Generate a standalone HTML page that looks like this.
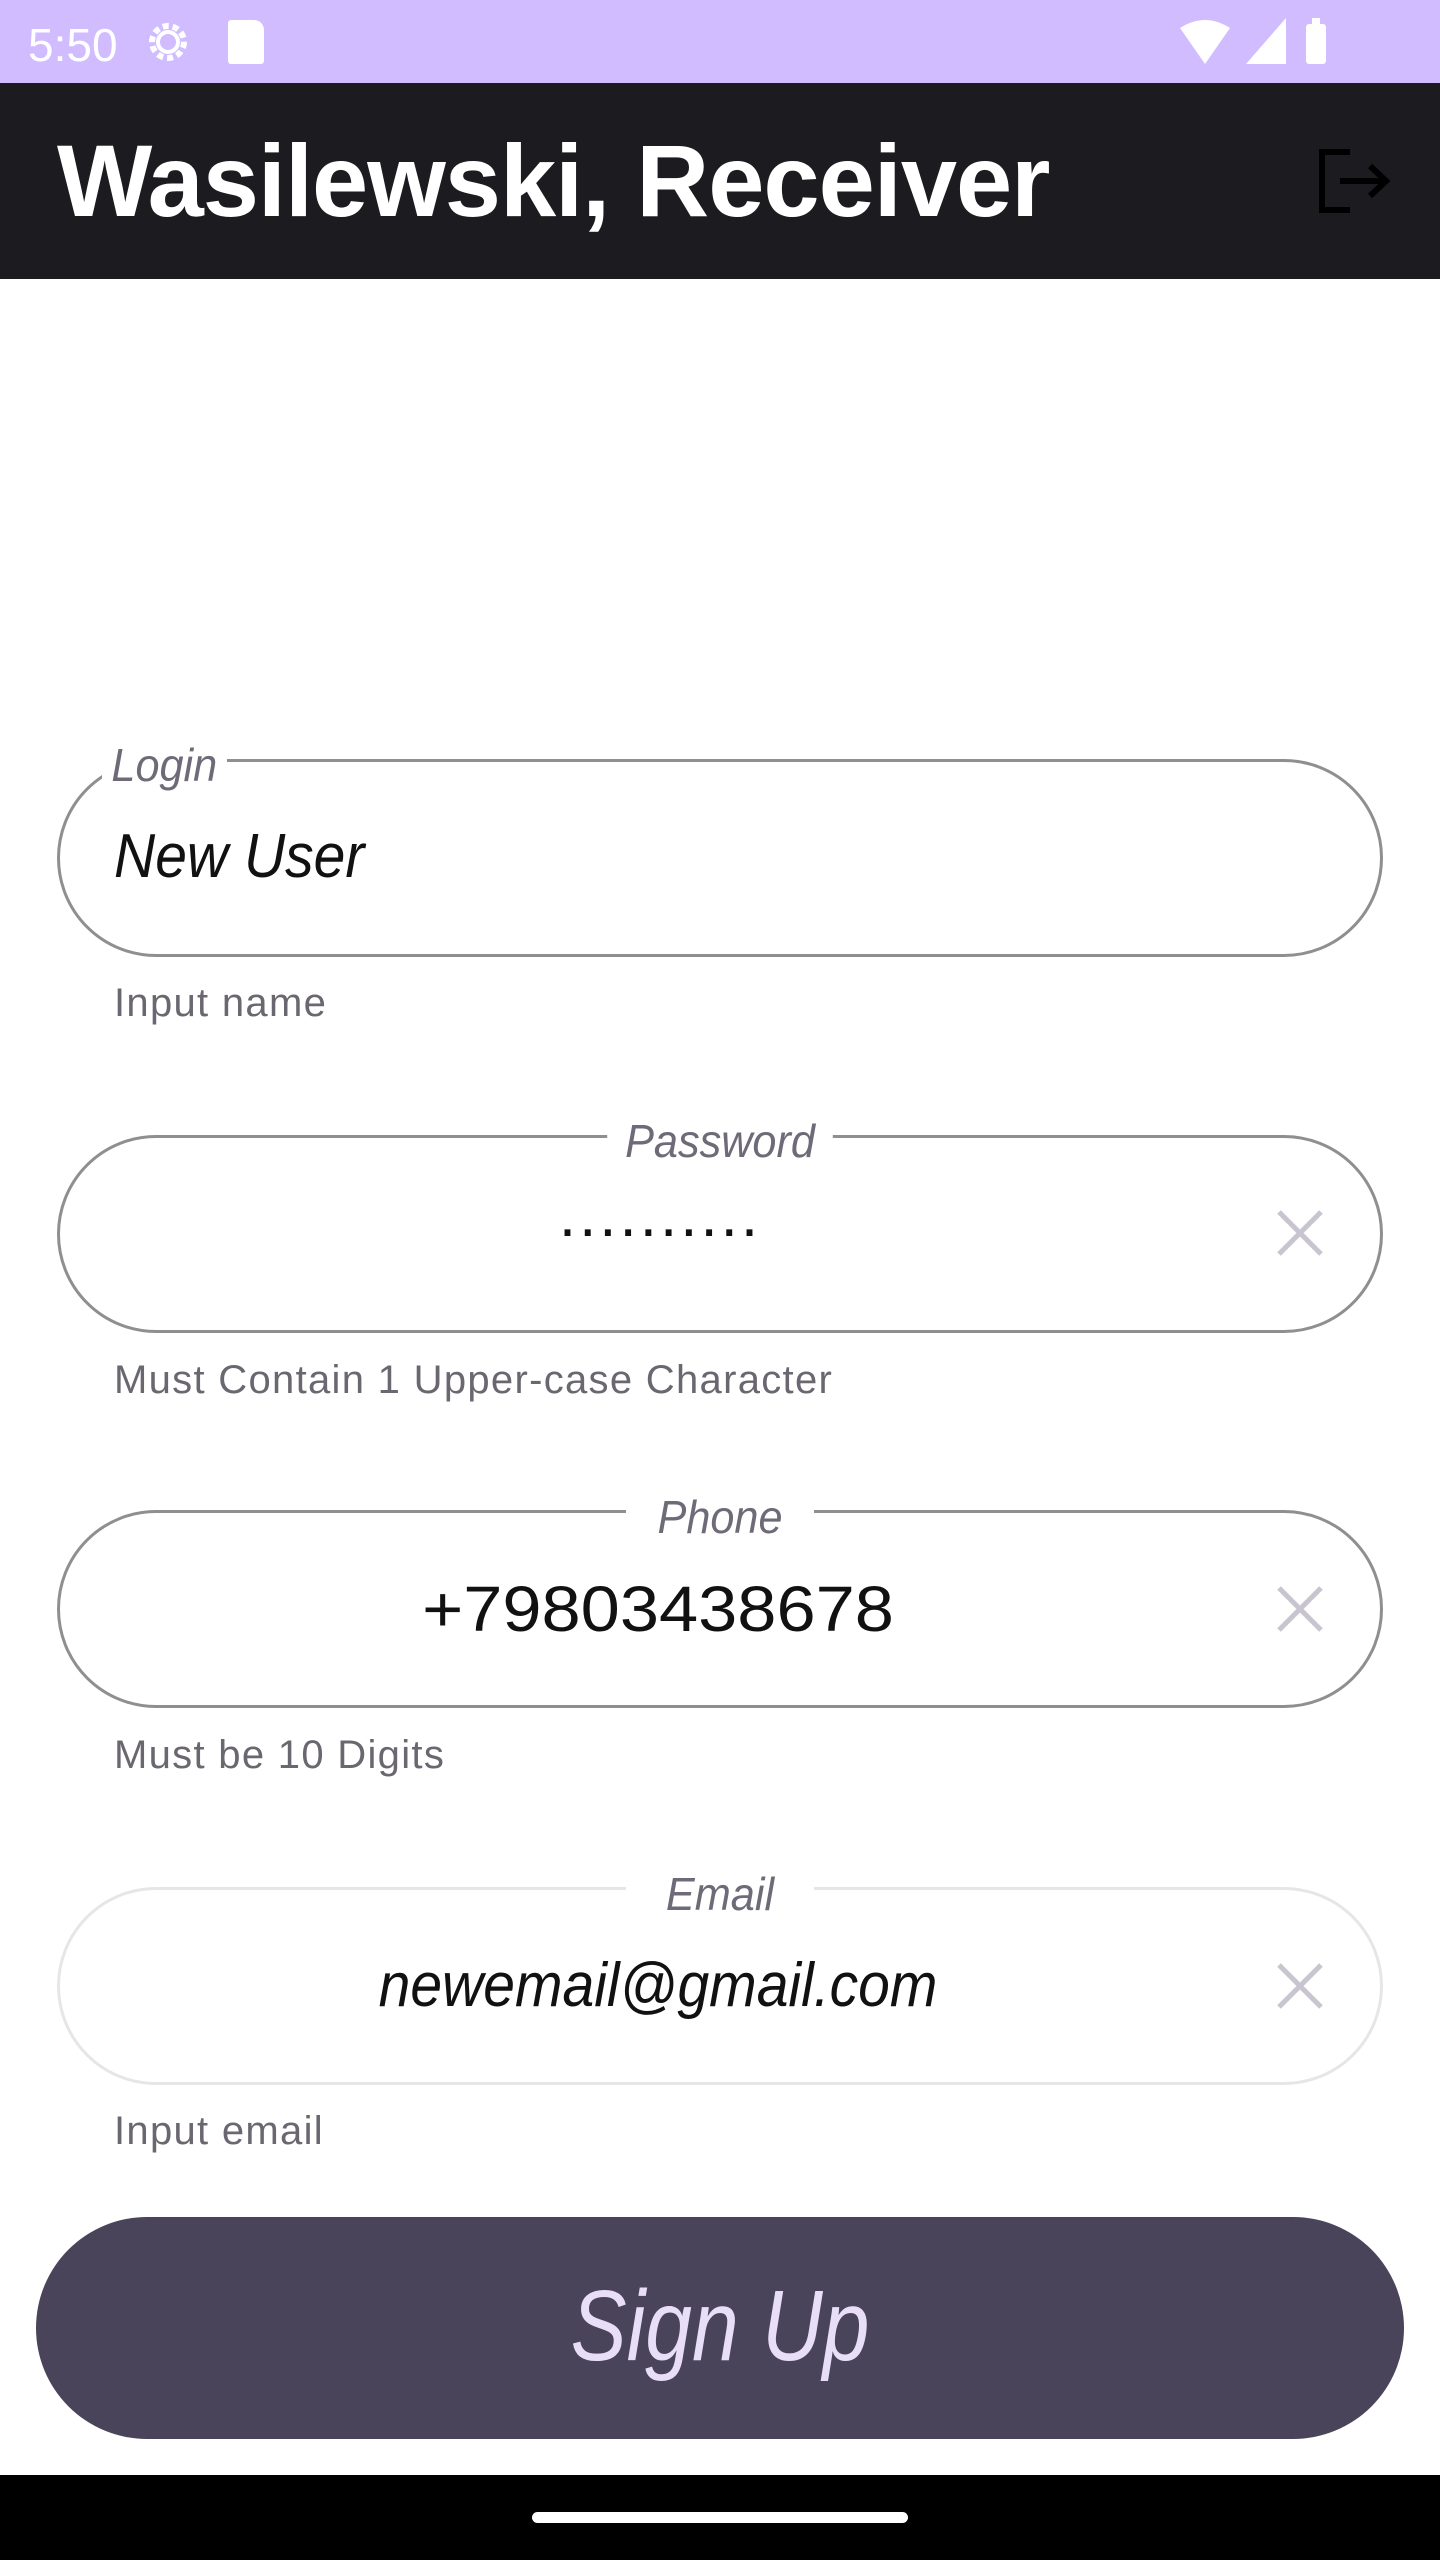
<!DOCTYPE html>
<html><head><meta charset="utf-8"><style>
*{margin:0;padding:0;box-sizing:border-box}
body{width:1440px;height:2560px;background:#fff;position:relative;overflow:hidden;font-family:"Liberation Sans",sans-serif}
.abs{position:absolute}
.status{left:0;top:0;width:1440px;height:83px;background:#d0bcff}
.header{left:0;top:83px;width:1440px;height:196px;background:#1c1b1f}
.title{left:57px;top:130px;font-size:102px;font-weight:bold;color:#fff;letter-spacing:-1px;line-height:1;transform:scaleX(.99);transform-origin:left}
.field{left:57px;width:1326px;height:198px;border:3px solid #8f8f8f;border-radius:99px}
.label{font-style:italic;font-size:46px;color:#6f6a78;background:#fff;padding:0 10px;line-height:1;transform:scaleX(.94);transform-origin:center}
.val{font-style:italic;font-size:62px;color:#111;line-height:1}
.help{left:114px;font-size:40px;color:#6b6770;letter-spacing:1.3px;line-height:1}
.x{width:50px;height:50px}
</style></head><body>
<div class="abs status"></div>
<div class="abs" style="left:28px;top:18px;font-size:46px;color:#fff">5:50</div>
<svg class="abs" style="left:142px;top:18px" width="52" height="48" viewBox="0 0 24 24"><circle cx="12" cy="12" r="8" fill="none" stroke="#fff" stroke-width="3" stroke-dasharray="3 2"/><circle cx="12" cy="12" r="5" fill="none" stroke="#fff" stroke-width="2"/></svg>
<div class="abs" style="left:228px;top:20px;width:36px;height:44px;background:#fff;border-radius:3px 10px 3px 3px"></div>
<svg class="abs" style="left:1180px;top:18px" width="150" height="46" viewBox="0 0 150 46"><path d="M0 10 Q25 -6 50 10 L25 46Z" fill="#fff"/><path d="M106 0 L106 46 L66 46Z" fill="#fff"/><rect x="126" y="6" width="20" height="40" rx="3" fill="#fff"/><rect x="132" y="0" width="8" height="8" fill="#fff"/></svg>
<div class="abs header"></div>
<div class="abs title">Wasilewski, Receiver</div>
<svg class="abs" style="left:1318px;top:148px" width="74" height="66" viewBox="0 0 74 66"><path d="M32 4 H4 V62 H32" fill="none" stroke="#000" stroke-width="6"/><path d="M22 33 H66 M52 18 L68 33 L52 48" fill="none" stroke="#000" stroke-width="6"/></svg>

<div class="abs field" style="top:759px"></div>
<div class="abs label" style="left:102px;top:742px;transform-origin:left">Login</div>
<div class="abs val" style="left:114px;top:826px;transform:scaleX(.92);transform-origin:left">New User</div>
<div class="abs help" style="top:983px">Input name</div>

<div class="abs field" style="top:1135px"></div>
<div class="abs label" style="left:600px;width:240px;text-align:center;top:1118px">Password</div>
<div class="abs" style="left:540px;width:240px;text-align:center;top:1180px;font-size:62px;letter-spacing:3px;color:#111">..........</div>
<svg class="abs x" style="left:1275px;top:1208px" viewBox="0 0 50 50"><path d="M4 4 L46 46 M46 4 L4 46" stroke="#c9c5d0" stroke-width="5"/></svg>
<div class="abs help" style="top:1360px">Must Contain 1 Upper-case Character</div>

<div class="abs field" style="top:1510px"></div>
<div class="abs label" style="left:620px;width:200px;text-align:center;top:1494px">Phone</div>
<div class="abs val" style="left:358px;width:600px;text-align:center;top:1577px;font-style:normal;font-size:64px;transform:scaleX(1.1)">+79803438678</div>
<svg class="abs x" style="left:1275px;top:1584px" viewBox="0 0 50 50"><path d="M4 4 L46 46 M46 4 L4 46" stroke="#c9c5d0" stroke-width="5"/></svg>
<div class="abs help" style="top:1735px">Must be 10 Digits</div>

<div class="abs field" style="top:1887px;border-color:#e6e6e6"></div>
<div class="abs label" style="left:620px;width:200px;text-align:center;top:1871px">Email</div>
<div class="abs val" style="left:308px;width:700px;text-align:center;top:1955px;transform:scaleX(.92)">newemail@gmail.com</div>
<svg class="abs x" style="left:1275px;top:1961px" viewBox="0 0 50 50"><path d="M4 4 L46 46 M46 4 L4 46" stroke="#c9c5d0" stroke-width="5"/></svg>
<div class="abs help" style="top:2111px">Input email</div>

<div class="abs" style="left:36px;top:2217px;width:1368px;height:222px;background:#49445a;border-radius:111px"></div>
<div class="abs" style="left:420px;width:600px;text-align:center;top:2276px;font-size:100px;font-style:italic;color:#e8def8;line-height:1;transform:scaleX(.84)">Sign Up</div>

<div class="abs" style="left:0;top:2475px;width:1440px;height:85px;background:#000"></div>
<div class="abs" style="left:532px;top:2512px;width:376px;height:11px;background:#fff;border-radius:6px"></div>
</body></html>
